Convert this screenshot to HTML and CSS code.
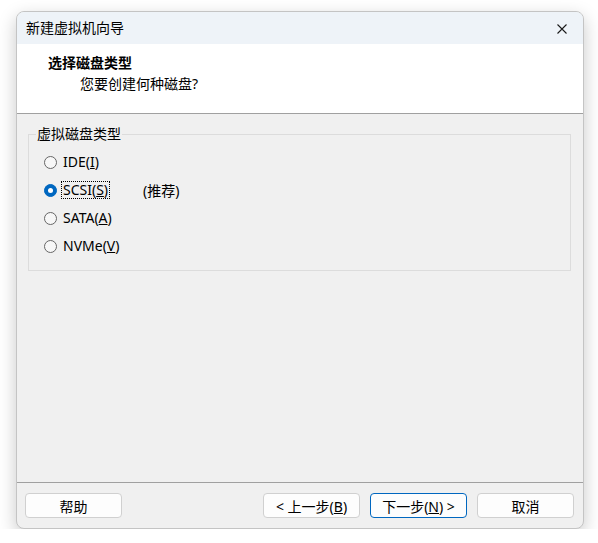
FILE: index.html
```html
<!DOCTYPE html>
<html lang="zh-CN">
<head>
    <meta charset="UTF-8">
    <meta name="viewport" content="width=device-width, initial-scale=1.0">
    <title>新建虚拟机向导</title>
    <link rel="stylesheet" href="styles.css">
</head>
<body>
    <div class="window">
        <div class="title-bar">
            <span class="title">新建虚拟机向导</span>
            <button class="close-btn" aria-label="关闭">
                <svg width="10" height="10" viewBox="0 0 10 10">
                    <path d="M0.5 0.5 L9.5 9.5 M9.5 0.5 L0.5 9.5" stroke="#1a1a1a" stroke-width="1.1" fill="none"/>
                </svg>
            </button>
        </div>
        <div class="header">
            <div class="header-title">选择磁盘类型</div>
            <div class="header-sub">您要创建何种磁盘?</div>
        </div>
        <div class="content">
            <fieldset class="group">
                <legend>虚拟磁盘类型</legend>
                <div class="options">
                    <label class="option">
                        <span class="radio"></span>
                        <span class="text">IDE(<u>I</u>)</span>
                    </label>
                    <label class="option">
                        <span class="radio checked"></span>
                        <span class="text focused">SCSI(<u>S</u>)</span>
                        <span class="note">(推荐)</span>
                    </label>
                    <label class="option">
                        <span class="radio"></span>
                        <span class="text">SATA(<u>A</u>)</span>
                    </label>
                    <label class="option">
                        <span class="radio"></span>
                        <span class="text">NVMe(<u>V</u>)</span>
                    </label>
                </div>
            </fieldset>
        </div>
        <div class="footer">
            <button class="btn">帮助</button>
            <div class="spacer"></div>
            <button class="btn">&lt; 上一步(<u>B</u>)</button>
            <button class="btn default">下一步(<u>N</u>) &gt;</button>
            <button class="btn">取消</button>
        </div>
    </div>
</body>
</html>
```

FILE: styles.css
```css
body {
    margin: 0;
    padding: 0;
    background-color: #ffffff;
    font-family: "Noto Sans", "Noto Sans CJK SC", sans-serif;
    font-size: 14px;
    color: #000;
}
.window {
    display: flex;
    flex-direction: column;
    width: 566px;
    height: 516px;
    margin: 11px 0 0 16px;
    background-color: #f0f0f0;
    border: 1px solid #c4c4c4;
    border-radius: 8px;
    overflow: hidden;
    box-shadow: 0 6px 18px rgba(0, 0, 0, 0.22);
}
.title-bar {
    display: flex;
    align-items: center;
    justify-content: space-between;
    height: 32px;
    padding: 0 8px 0 9px;
    background-color: #eef3f8;
}
.title {
    line-height: 20px;
}
.close-btn {
    display: flex;
    align-items: center;
    justify-content: center;
    width: 26px;
    height: 26px;
    padding: 0;
    margin-top: 1px;
    border: none;
    background: transparent;
}
.header {
    height: 69px;
    padding: 9px 0 0 31px;
    box-sizing: border-box;
    background-color: #ffffff;
    border-bottom: 1px solid #a0a0a0;
    height: 70px;
}
.header-title {
    font-weight: bold;
    line-height: 20px;
}
.header-sub {
    padding-left: 32px;
    line-height: 22px;
}
.content {
    flex: 1;
    padding: 10px 12px 0 11px;
}
.group {
    margin: 0;
    padding: 0 8px 10px 7px;
    border: 1px solid #dcdcdc;
}
.group legend {
    padding: 0 1px;
    line-height: 20px;
}
.options {
    display: flex;
    flex-direction: column;
    padding: 4px 0 0 8px;
}
.option {
    display: flex;
    align-items: center;
    height: 28px;
}
.radio {
    width: 11px;
    height: 11px;
    border: 1px solid #666;
    border-radius: 50%;
    background-color: #f7f7f7;
    margin-right: 5px;
    box-sizing: content-box;
}
.radio.checked {
    background-color: #0067c0;
    border-color: #0067c0;
    display: flex;
    align-items: center;
    justify-content: center;
}
.radio.checked::after {
    content: "";
    width: 5px;
    height: 5px;
    border-radius: 50%;
    background-color: #fff;
}
.text {
    padding: 0 1px;
    line-height: 16px;
}
.text.focused {
    outline: 1px dotted #000;
}
.note {
    margin-left: 34px;
}
.footer {
    display: flex;
    align-items: flex-start;
    gap: 10px;
    height: 45px;
    padding: 10px 9px 0 8px;
    box-sizing: border-box;
    border-top: 1px solid #a0a0a0;
    height: 46px;
}
.spacer {
    flex: 1;
}
.btn {
    width: 97px;
    height: 25px;
    padding: 0;
    font-family: inherit;
    font-size: 14px;
    color: #000;
    background-color: #fdfdfd;
    border: 1px solid #d0d0d0;
    border-radius: 4px;
}
.btn.default {
    border-color: #0067c0;
}
```
